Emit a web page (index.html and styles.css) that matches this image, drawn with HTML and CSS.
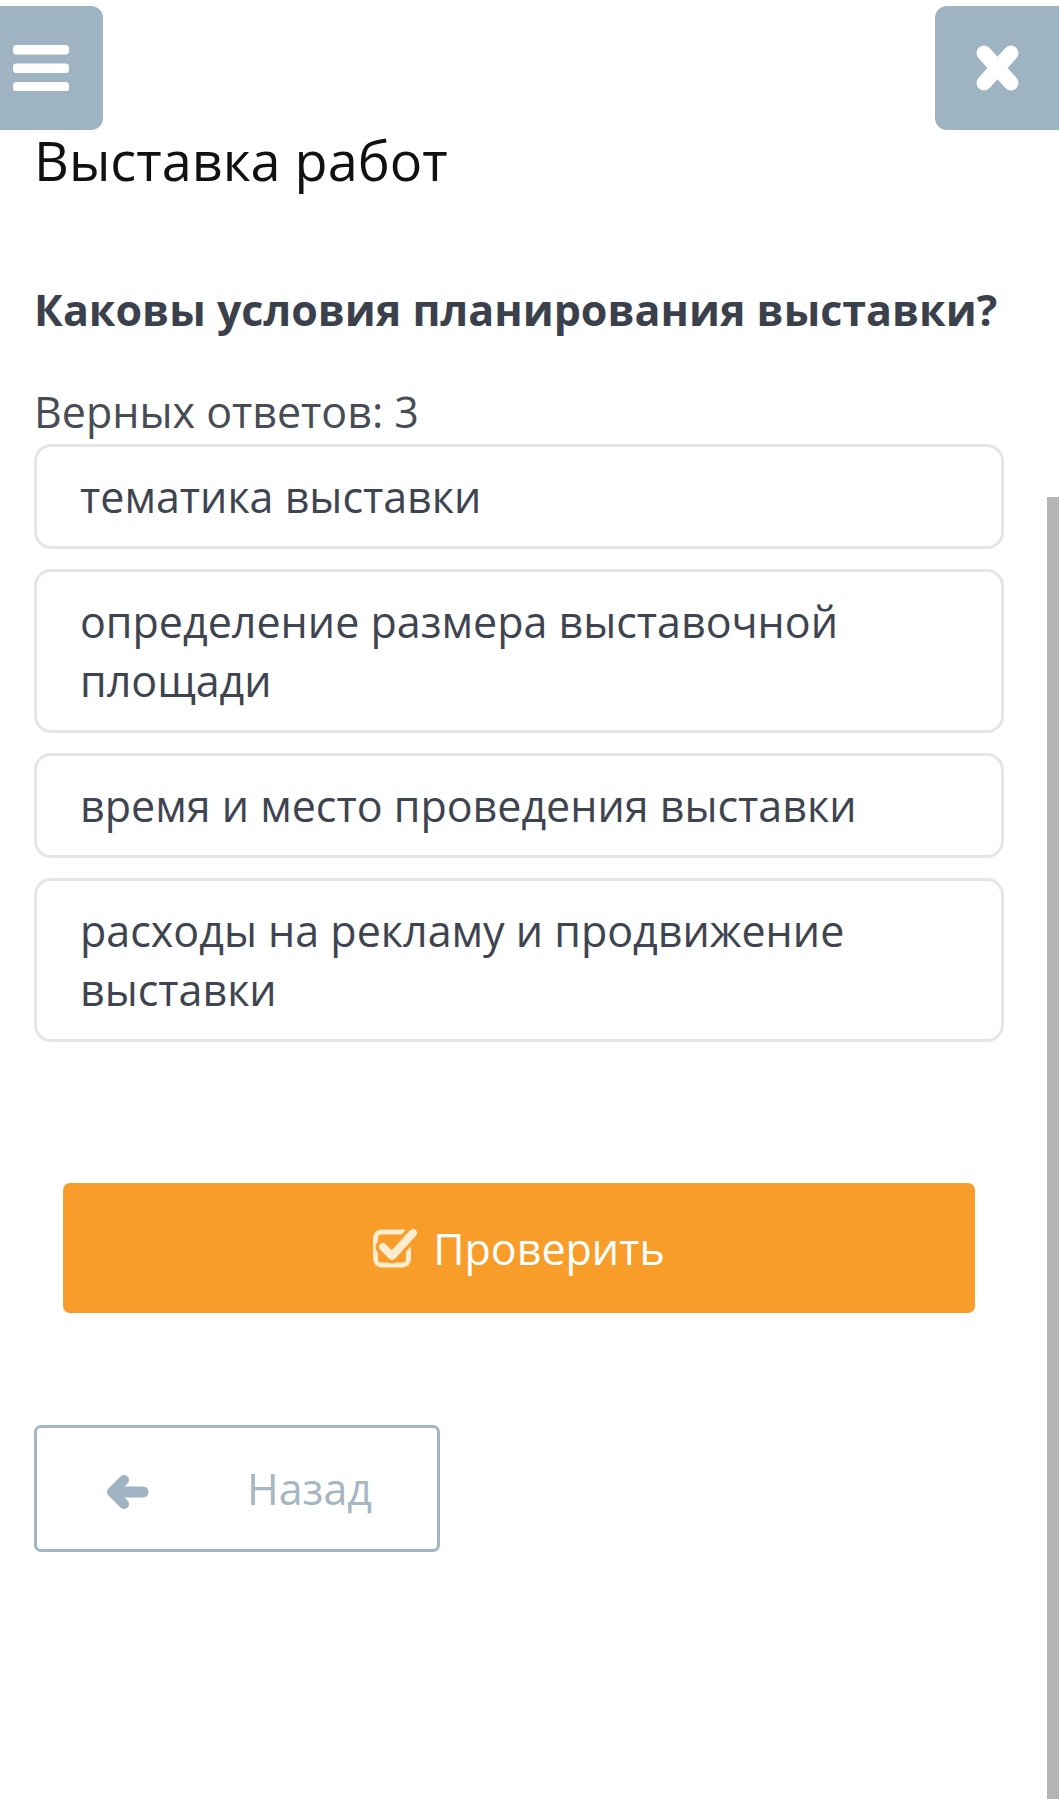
FILE: index.html
```html
<!DOCTYPE html>
<html lang="ru">
<head>
    <meta charset="UTF-8">
    <meta name="viewport" content="width=device-width, initial-scale=1.0">
    <title>Выставка работ</title>
    <link rel="stylesheet" href="styles.css">
</head>
<body>
    <div class="topbar">
        <button class="icon-btn menu-btn" type="button" aria-label="Меню">
            <svg width="56" height="46" viewBox="0 0 56 46">
                <rect x="0" y="0" width="56" height="9.5" rx="3.5" fill="#fff"/>
                <rect x="0" y="18.5" width="56" height="9.5" rx="3.5" fill="#fff"/>
                <rect x="0" y="37" width="56" height="9.5" rx="3.5" fill="#fff"/>
            </svg>
        </button>
        <button class="icon-btn close-btn" type="button" aria-label="Закрыть">
            <svg width="43" height="46" viewBox="0 0 43 46">
                <path d="M8 8 L35 38 M35 8 L8 38" stroke="#fff" stroke-width="15" stroke-linecap="round"/>
            </svg>
        </button>
    </div>

    <main class="page">
        <h1 class="title">Выставка работ</h1>
        <h2 class="question">Каковы условия планирования выставки?</h2>
        <div class="hint">Верных ответов: 3</div>

        <div class="answers">
            <div class="answer">тематика выставки</div>
            <div class="answer">определение размера выставочной площади</div>
            <div class="answer">время и место проведения выставки</div>
            <div class="answer">расходы на рекламу и продвижение выставки</div>
        </div>

        <div class="check-row">
            <button class="btn-check" type="button">
                <svg width="46" height="42" viewBox="0 0 46 42">
                    <rect x="2.5" y="6" width="33" height="33" rx="6" fill="none" stroke="#fdeccd" stroke-width="5"/>
                    <polyline points="10,21 19,30 40,7" fill="none" stroke="#f99d2a" stroke-width="15" stroke-linecap="round" stroke-linejoin="round"/>
                    <polyline points="10,21 19,30 40,7" fill="none" stroke="#fdeccd" stroke-width="8" stroke-linecap="round" stroke-linejoin="round"/>
                </svg>
                <span>Проверить</span>
            </button>
        </div>

        <button class="btn-back" type="button">
            <svg width="42" height="34" viewBox="0 0 42 34">
                <polyline points="17,5 5,17 17,29" fill="none" stroke="#9fb3c3" stroke-width="10" stroke-linecap="round" stroke-linejoin="round"/>
                <line x1="7" y1="17" x2="36" y2="17" stroke="#9fb3c3" stroke-width="11" stroke-linecap="round"/>
            </svg>
            <span>Назад</span>
        </button>
    </main>

    <div class="scrollbar"></div>
</body>
</html>
```

FILE: styles.css
```css
* {
    margin: 0;
    padding: 0;
    box-sizing: border-box;
}

body {
    font-family: 'Open Sans', 'Noto Sans', sans-serif;
    background: #fff;
    color: #3e4450;
}

/* верхние кнопки поверх контента */
.topbar {
    position: fixed;
    top: 6px;
    left: 0;
    right: 0;
    display: flex;
    justify-content: space-between;
    z-index: 2;
}

.icon-btn {
    height: 124px;
    border: none;
    background: #9eb4c3;
    display: flex;
    align-items: center;
    cursor: pointer;
}

.menu-btn {
    width: 103px;
    padding-left: 13px;
    border-radius: 0 12px 12px 0;
}

.close-btn {
    width: 124px;
    justify-content: center;
    border-radius: 12px 0 0 12px;
}

.page {
    padding: 125px 55px 0 34px;
}

.title {
    font-size: 54px;
    line-height: 70px;
    font-weight: 400;
    color: #111;
}

.question {
    margin-top: 85px;
    font-size: 43px;
    line-height: 60px;
    font-weight: 700;
    color: #3b414c;
    white-space: nowrap;
}

.hint {
    margin-top: 43px;
    font-size: 43px;
    line-height: 58px;
    color: #474c55;
}

.answers {
    margin-top: 3px;
    display: flex;
    flex-direction: column;
    gap: 20px;
}

.answer {
    border: 3px solid #e3e5e8;
    border-radius: 17px;
    padding: 20px 40px 20px 43px;
    font-size: 43px;
    line-height: 59px;
    color: #3e4450;
    background: #fff;
}

.check-row {
    margin-top: 141px;
    padding: 0 29px;
}

.btn-check {
    width: 100%;
    height: 130px;
    border: none;
    border-radius: 7px;
    background: #f99d2a;
    color: #fff;
    font-family: inherit;
    font-size: 43px;
    display: flex;
    align-items: center;
    justify-content: center;
    gap: 14px;
    cursor: pointer;
}

.btn-check svg {
    margin-top: -2px;
}

.btn-back {
    margin-top: 112px;
    width: 406px;
    height: 127px;
    border: 3px solid #a2b5c4;
    border-radius: 7px;
    background: #fff;
    color: #a6b6c3;
    font-family: inherit;
    font-size: 43px;
    display: flex;
    align-items: center;
    padding-left: 70px;
    gap: 98px;
    cursor: pointer;
}

.btn-back svg {
    margin-top: 6px;
}

.scrollbar {
    position: fixed;
    right: 0;
    top: 497px;
    bottom: 0;
    width: 12px;
    background: #b5b5b5;
}
```
